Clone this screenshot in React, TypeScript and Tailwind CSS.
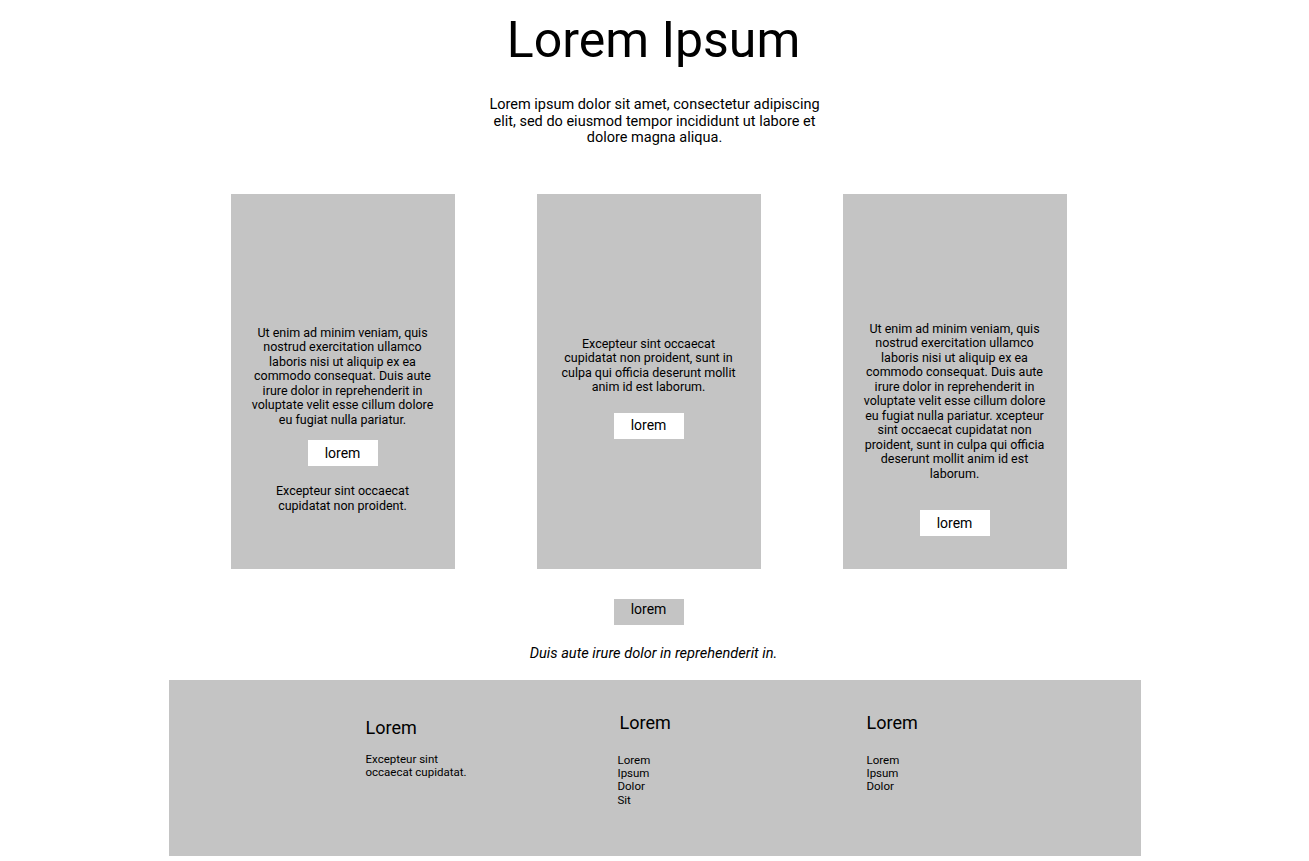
export default function App() {
  return (
    <div className="min-h-[861px] bg-white font-['Roboto',sans-serif] text-black">
      {/* Header */}
      <div className="flex flex-col items-center pt-[10px]">
        <h1 className="ml-[-2px] text-[50px] leading-[60px] font-normal">Lorem Ipsum</h1>
        <p className="mt-[27px] w-[350px] text-center text-[14.5px] leading-[16.5px]">
          Lorem ipsum dolor sit amet, consectetur adipiscing elit, sed do eiusmod tempor incididunt ut labore et
          dolore magna aliqua.
        </p>
      </div>

      {/* Cards */}
      <div className="mt-[47px] flex justify-center gap-[82px] pr-[12px]">
        <div className="flex h-[375px] w-[224px] flex-col items-center bg-[#c4c4c4] pt-[132px] text-center">
          <p className="text-[12.5px] leading-[14.5px]">
            Ut enim ad minim veniam, quis
            <br />
            nostrud exercitation ullamco
            <br />
            laboris nisi ut aliquip ex ea
            <br />
            commodo consequat. Duis aute
            <br />
            irure dolor in reprehenderit in
            <br />
            voluptate velit esse cillum dolore
            <br />
            eu fugiat nulla pariatur.
          </p>
          <button className="mt-[13px] h-[26px] w-[70px] bg-white text-[14px]">lorem</button>
          <p className="mt-[18px] text-[12.5px] leading-[14.5px]">
            Excepteur sint occaecat
            <br />
            cupidatat non proident.
          </p>
        </div>

        <div className="flex h-[375px] w-[224px] flex-col items-center bg-[#c4c4c4] pt-[143px] text-center">
          <p className="text-[12.5px] leading-[14.5px]">
            Excepteur sint occaecat
            <br />
            cupidatat non proident, sunt in
            <br />
            culpa qui officia deserunt mollit
            <br />
            anim id est laborum.
          </p>
          <button className="mt-[18px] h-[26px] w-[70px] bg-white text-[14px]">lorem</button>
        </div>

        <div className="flex h-[375px] w-[224px] flex-col items-center bg-[#c4c4c4] pt-[128px] text-center">
          <p className="text-[12.5px] leading-[14.5px]">
            Ut enim ad minim veniam, quis
            <br />
            nostrud exercitation ullamco
            <br />
            laboris nisi ut aliquip ex ea
            <br />
            commodo consequat. Duis aute
            <br />
            irure dolor in reprehenderit in
            <br />
            voluptate velit esse cillum dolore
            <br />
            eu fugiat nulla pariatur. xcepteur
            <br />
            sint occaecat cupidatat non
            <br />
            proident, sunt in culpa qui officia
            <br />
            deserunt mollit anim id est
            <br />
            laborum.
          </p>
          <button className="mt-[29px] h-[26px] w-[70px] bg-white text-[14px]">lorem</button>
        </div>
      </div>

      {/* Bottom action */}
      <div className="flex flex-col items-center">
        <button className="mr-[12px] mt-[30px] h-[26px] w-[70px] bg-[#c4c4c4] pb-[4px] text-[14px]">lorem</button>
        <p className="mr-[2px] mt-[20px] text-[14.6px] italic leading-[17px]">
          Duis aute irure dolor in reprehenderit in.
        </p>
      </div>

      {/* Footer */}
      <div className="mx-auto mt-[18px] flex h-[176px] w-[972px] bg-[#c4c4c4] pl-[197px] pt-[31px]">
        <div className="w-[252px] pt-[5px]">
          <h3 className="text-[18px] leading-[24px]">Lorem</h3>
          <p className="mt-[13px] text-[11.5px] leading-[13.4px]">
            Excepteur sint
            <br />
            occaecat cupidatat.
          </p>
        </div>
        <div className="w-[249px]">
          <h3 className="ml-[2px] text-[18px] leading-[24px]">Lorem</h3>
          <p className="mt-[19px] text-[11.5px] leading-[13.4px]">
            Lorem
            <br />
            Ipsum
            <br />
            Dolor
            <br />
            Sit
          </p>
        </div>
        <div>
          <h3 className="text-[18px] leading-[24px]">Lorem</h3>
          <p className="mt-[19px] text-[11.5px] leading-[13.4px]">
            Lorem
            <br />
            Ipsum
            <br />
            Dolor
          </p>
        </div>
      </div>
    </div>
  );
}
